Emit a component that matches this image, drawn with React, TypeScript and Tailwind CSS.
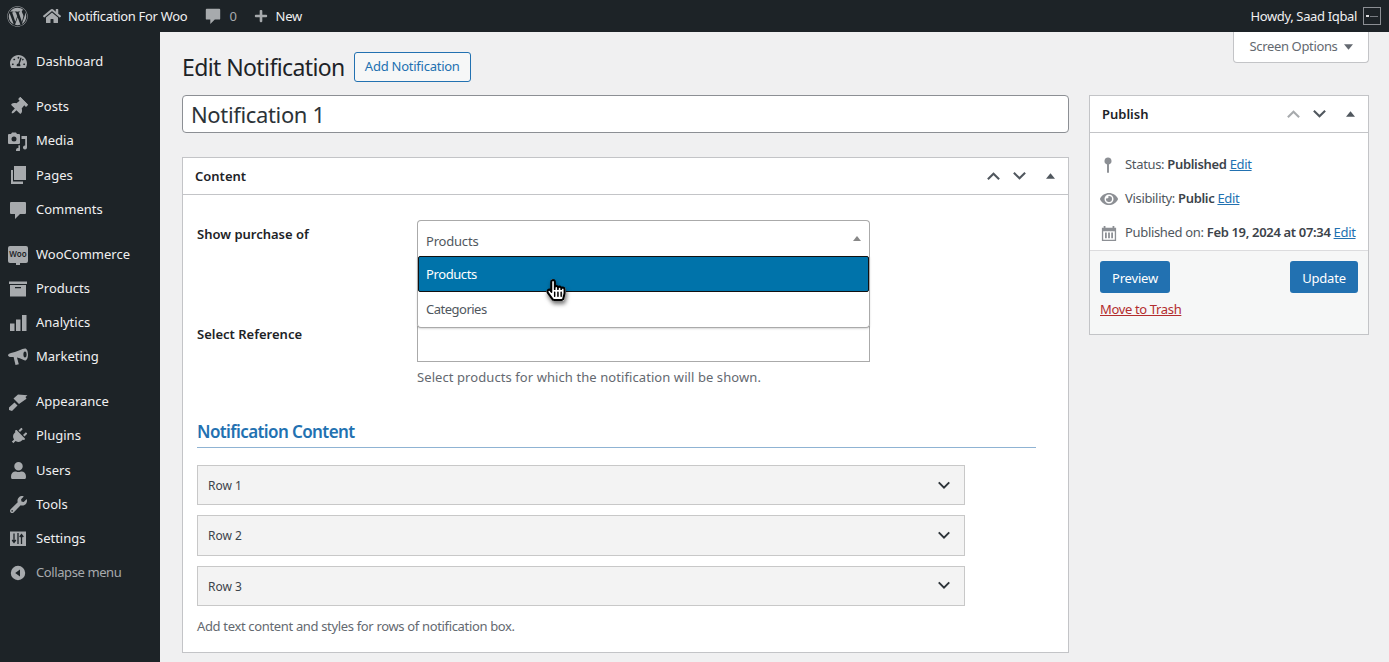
import type { ReactNode } from "react";
import {
  FaWordpress,
  FaHome,
  FaPlus,
  FaTachometerAlt,
  FaThumbtack,
  FaPlug,
  FaUser,
  FaWrench,
  FaEye,
  FaHandPointer,
  FaRegHandPointer,
} from "react-icons/fa";

const font = "font-['Noto_Sans','Open_Sans',sans-serif]";

function CommentIcon({ className }: { className?: string }) {
  return (
    <svg viewBox="0 0 20 20" className={className} fill="currentColor">
      <path d="M3 2h14a1 1 0 0 1 1 1v10a1 1 0 0 1-1 1h-5l-5 5v-5H3a1 1 0 0 1-1-1V3a1 1 0 0 1 1-1z" />
    </svg>
  );
}

function MediaIcon() {
  return (
    <svg viewBox="0 0 20 20" className="w-5 h-5" fill="currentColor">
      <path d="M1 3h2l1-1.500h4L9 3h2a1 1 0 0 1 1 1v8a1 1 0 0 1-1 1H1a1 1 0 0 1-1-1V4a1 1 0 0 1 1-1zm5 2.500a2.500 2.500 0 1 0 0 5 2.500 2.500 0 0 0 0-5z" />
      <path d="M13.500 5H19v11.500a2 2 0 1 1-1.800-2V8h-3.700zM12 14.300V19a2 2 0 1 1-1.600-2v-2.700z" />
    </svg>
  );
}

function PagesIcon() {
  return (
    <svg viewBox="0 0 20 20" className="w-5 h-5" fill="currentColor">
      <path d="M6 1h12v14H6z" />
      <path d="M3 5v14h12v-2.500H5V5z" />
    </svg>
  );
}

function WooIcon() {
  return (
    <span className="relative flex w-5 h-[17px] items-center justify-center rounded-[2px] bg-[#a7aaad] text-[8px] leading-none font-semibold text-[#1d2327]">
      Woo
      <span className="absolute left-[8px] -bottom-[2px] w-[4px] h-[3px] bg-[#a7aaad]" />
    </span>
  );
}

function ArchiveIcon() {
  return (
    <svg viewBox="0 0 20 20" className="w-5 h-5" fill="currentColor">
      <path d="M1 2.500h18V5H1zM2 6h16v11.500H2zm5 2v1.200h6V8z" fillRule="evenodd" />
    </svg>
  );
}

function BarsIcon() {
  return (
    <svg viewBox="0 0 20 20" className="w-5 h-5" fill="currentColor">
      <path d="M2 10.500h4.500V18H2zM8 6.500h4.500V18H8zM14 2h4.500v16H14z" />
    </svg>
  );
}

function MegaphoneIcon() {
  return (
    <svg viewBox="0 0 20 20" className="w-5 h-5" fill="currentColor">
      <path d="M17 1.500c1.800 0 3 2.600 3 6s-1.200 6-3 6c-1.200 0-4-2.400-8-3l1.800 6.800-3.300.7L5.600 10H3a3 3 0 0 1-3-1.500C0 7.500 1 6.500 3 6c5-.7 11.500-4.500 14-4.500zm0 3c-1 0-1.600 1.300-1.600 3s.6 3 1.600 3 1.600-1.300 1.600-3-.6-3-1.600-3z" fillRule="evenodd" />
    </svg>
  );
}

function BrushIcon() {
  return (
    <svg viewBox="0 0 20 20" className="w-5 h-5" fill="currentColor">
      <path d="M1 15.500l5.500-5 3 3-5.500 5.500-3-1z" />
      <path d="M5.500 6.500L10 2.500l9.500.8-2 1.700 1 1.800-7.500 5.200z" />
    </svg>
  );
}

function SlidersIcon() {
  return (
    <svg viewBox="0 0 20 20" className="w-5 h-5">
      <path d="M2 2.500h16v14.500H2z" fill="currentColor" />
      <path d="M6 4.500v9M4.200 11 6 13.500 7.800 11M13.500 15V6M11.700 8l1.800-2.500L15.300 8M10 4v11" stroke="#1d2327" strokeWidth="1.300" fill="none" />
    </svg>
  );
}

function CollapseIcon() {
  return (
    <svg viewBox="0 0 20 20" className="w-4 h-4" fill="currentColor">
      <path d="M10 1a9 9 0 1 1 0 18 9 9 0 0 1 0-18zm2.500 4.500L6.500 10l6 4.500z" fillRule="evenodd" />
    </svg>
  );
}

function Chevron({ up, className }: { up?: boolean; className?: string }) {
  return (
    <svg viewBox="0 0 16 10" className={className} fill="none" stroke="currentColor" strokeWidth="2.200">
      <path d={up ? "M2 8.500l6-6 6 6" : "M2 1.500l6 6 6-6"} />
    </svg>
  );
}

function Triangle({ className }: { className?: string }) {
  return (
    <svg viewBox="0 0 10 6" className={className} fill="currentColor">
      <path d="M5 0l5 6H0z" />
    </svg>
  );
}

type MenuItem = { label: string; icon: ReactNode; gap?: boolean };

const menu: MenuItem[] = [
  { label: "Dashboard", icon: <FaTachometerAlt size={17} /> },
  { label: "Posts", icon: <FaThumbtack size={18} className="rotate-45" />, gap: true },
  { label: "Media", icon: <MediaIcon /> },
  { label: "Pages", icon: <PagesIcon /> },
  { label: "Comments", icon: <CommentIcon className="w-5 h-5" /> },
  { label: "WooCommerce", icon: <WooIcon />, gap: true },
  { label: "Products", icon: <ArchiveIcon /> },
  { label: "Analytics", icon: <BarsIcon /> },
  { label: "Marketing", icon: <MegaphoneIcon /> },
  { label: "Appearance", icon: <BrushIcon />, gap: true },
  { label: "Plugins", icon: <FaPlug size={17} className="rotate-45" /> },
  { label: "Users", icon: <FaUser size={17} /> },
  { label: "Tools", icon: <FaWrench size={17} /> },
  { label: "Settings", icon: <SlidersIcon /> },
];

function Sidebar() {
  return (
    <aside className="w-[160px] shrink-0 bg-[#1d2327] pt-[12.800px]">
      {menu.map((item) => (
        <div
          key={item.label}
          className={`flex h-[34.25px] items-center pl-[8px] text-[13px] text-[#f0f0f1] ${item.gap ? "mt-[10.6px]" : ""}`}
        >
          <span className="flex w-[20px] justify-center text-[#a7aaad]">{item.icon}</span>
          <span className="ml-[8px]">{item.label}</span>
        </div>
      ))}
      <div className="flex h-[34.3px] items-center pl-[9px] text-[13px] tracking-[-0.4px] text-[#a7aaad]">
        <span className="flex w-[18px] justify-center">
          <CollapseIcon />
        </span>
        <span className="ml-[9px]">Collapse menu</span>
      </div>
    </aside>
  );
}

function TopBar() {
  return (
    <header className="flex h-[32px] shrink-0 items-center justify-between bg-[#1d2327] text-[13px] tracking-[-0.3px] text-[#f0f0f1]">
      <div className="flex items-center">
        <FaWordpress size={21} className="ml-[7px] text-[#a7aaad]" />
        <FaHome size={18} className="ml-[15px] text-[#a7aaad]" />
        <span className="ml-[7px] pt-[2px]">Notification For Woo</span>
        <CommentIcon className="ml-[17px] w-[18px] h-[18px] text-[#a7aaad]" />
        <span className="ml-[7px] pt-[2px] text-[#a7aaad]">0</span>
        <FaPlus size={14} className="ml-[17px] text-[#a7aaad]" />
        <span className="ml-[8px] pt-[2px]">New</span>
      </div>
      <div className="flex items-center pr-[8px]">
        <span className="pt-[2px] tracking-[-0.35px]">Howdy, Saad Iqbal</span>
        <span className="ml-[6px] flex w-[18px] h-[18px] items-center gap-[1px] border border-[#8c8f94] bg-[#1d2327] pl-[2px]">
          <span className="w-[3px] h-[2px] bg-[#dcdcde]" />
          <span className="w-[8px] h-[1px] bg-[#787c82]" />
        </span>
      </div>
    </header>
  );
}

function Row({ label }: { label: string }) {
  return (
    <div className="flex flex-1 items-center justify-between border border-[#c8c8c8] bg-[#f3f3f3] pl-[10px] pr-[13px] text-[12px] text-[#3c434a]">
      <span className="pt-[2px]">{label}</span>
      <Chevron className="w-[14px] h-[9px] text-[#2c3338]" />
    </div>
  );
}

function ContentBox() {
  return (
    <section className="mt-[24px] h-[496px] border border-[#c3c4c7] bg-white">
      <div className="flex h-[37px] items-center justify-between border-b border-[#c3c4c7] pl-[12px] pr-[13px]">
        <span className="pt-[2px] text-[13px] font-semibold text-[#1d2327]">Content</span>
        <div className="flex items-center">
          <Chevron up className="w-[15px] h-[10px] text-[#50575e]" />
          <Chevron className="ml-[11px] w-[15px] h-[10px] text-[#50575e]" />
          <Triangle className="ml-[19px] w-[9px] h-[6px] text-[#50575e]" />
        </div>
      </div>
      <div className="pl-[14px] pr-[32px] pt-[25px]">
        <div className="flex">
          <label className="w-[220px] pt-[5px] text-[13px] font-semibold text-[#1d2327]">Show purchase of</label>
          <div className="relative w-[453px]">
            <div className="flex h-[36px] items-center justify-between rounded-t-[4px] border border-b-0 border-[#aaa] bg-white pl-[8px] pr-[8px] text-[13px] tracking-[-0.2px] text-[#50575e]">
              <span className="pt-[7px]">Products</span>
              <Triangle className="w-[8px] h-[5px] text-[#888]" />
            </div>
            <div className="absolute left-0 top-[36px] z-10 w-full rounded-b-[4px] border border-t-0 border-[#aaa] bg-white shadow-[0_1px_2px_rgba(0,0,0,0.15)]">
              <div className="flex h-[36px] items-center rounded-[2px] border border-[#111] bg-[#0073aa] pl-[7px] pt-[2px] text-[13px] tracking-[-0.4px] text-white">
                Products
              </div>
              <div className="flex h-[35px] items-center pl-[8px] text-[13px] tracking-[-0.5px] text-[#50575e]">Categories</div>
            </div>
            <div className="absolute left-[128px] top-[59px] z-20 h-[26px] w-[20px] drop-shadow-[1px_3px_2px_rgba(0,0,0,0.55)]">
              <FaHandPointer size={22} className="absolute left-0 top-0 text-white" />
              <FaRegHandPointer size={22} className="absolute left-0 top-0 text-black" />
            </div>
          </div>
        </div>
        <div className="mt-[70px] flex">
          <label className="-mt-[1px] w-[220px] text-[13px] font-semibold text-[#1d2327]">Select Reference</label>
          <div className="w-[453px]">
            <div className="h-[36px] border border-[#aaa] bg-white" />
            <p className="mt-[6px] text-[13px] tracking-[0.08px] text-[#646970]">Select products for which the notification will be shown.</p>
          </div>
        </div>
        <h2 className="mt-[31px] border-b border-[#8fb3d3] pb-[3px] text-[17px] font-semibold tracking-[-0.6px] text-[#2271b1]">
          Notification Content
        </h2>
        <div className="mt-[17px] flex h-[141px] w-[768px] flex-col gap-[10px]">
          <Row label="Row 1" />
          <Row label="Row 2" />
          <Row label="Row 3" />
        </div>
        <p className="mt-[11px] text-[13px] tracking-[-0.34px] text-[#646970]">Add text content and styles for rows of notification box.</p>
      </div>
    </section>
  );
}

function PublishBox() {
  return (
    <section className="h-[240px] w-[280px] shrink-0 border border-[#c3c4c7] bg-white">
      <div className="flex h-[37px] items-center justify-between border-b border-[#c3c4c7] pl-[12px] pr-[13px]">
        <span className="pt-[2px] text-[13px] font-semibold text-[#1d2327]">Publish</span>
        <div className="flex items-center">
          <Chevron up className="w-[15px] h-[10px] text-[#a7aaad]" />
          <Chevron className="ml-[11px] w-[15px] h-[10px] text-[#50575e]" />
          <Triangle className="ml-[19px] w-[9px] h-[6px] text-[#50575e]" />
        </div>
      </div>
      <div className="h-[81px] pt-[15px] text-[13px] tracking-[-0.33px] text-[#50575e]">
        <div className="flex h-[34px] items-center pl-[10px]">
          <span className="flex w-[16px] justify-center text-[#8c8f94]">
            <svg viewBox="0 0 10 20" className="w-[8px] h-[17px]" fill="currentColor">
              <path d="M5 0a4.500 4.500 0 0 1 1.200 8.800V19H3.800V8.800A4.500 4.500 0 0 1 5 0z" />
            </svg>
          </span>
          <span className="ml-[9px]">
            Status: <b className="font-semibold text-[#3c434a]">Published</b> <a className="text-[#2271b1] underline">Edit</a>
          </span>
        </div>
        <div className="flex h-[34px] items-center pl-[10px]">
          <span className="flex w-[18px] justify-center text-[#8c8f94]">
            <FaEye size={18} />
          </span>
          <span className="ml-[7px]">
            Visibility: <b className="font-semibold text-[#3c434a]">Public</b> <a className="text-[#2271b1] underline">Edit</a>
          </span>
        </div>
        <div className="flex h-[34px] items-center pl-[10px]">
          <span className="flex w-[18px] justify-center text-[#8c8f94]">
            <svg viewBox="0 0 18 18" className="w-[16px] h-[16px]" fill="currentColor">
              <path d="M1 3h2V1h2v2h8V1h2v2h2v15H1zm1.500 4v9.500h13V7zM4.500 8.500h2v6.500h-2zM8 8.500h2v6.500H8zm3.500 0h2v6.500h-2z" fillRule="evenodd" />
            </svg>
          </span>
          <span className="ml-[7px] whitespace-nowrap">
            Published on: <b className="font-semibold text-[#3c434a]">Feb 19, 2024 at 07:34</b> <a className="text-[#2271b1] underline">Edit</a>
          </span>
        </div>
      </div>
      <div className="mt-[36px] h-[84px] border-t border-[#dcdcde] bg-[#f6f7f7] px-[10px] pt-[10px]">
        <div className="flex justify-between">
          <button className="h-[32px] w-[70px] rounded-[3px] bg-[#2271b1] pt-[3px] text-[13px] tracking-[-0.2px] text-white">Preview</button>
          <button className="h-[32px] w-[68px] rounded-[3px] bg-[#2271b1] pt-[3px] text-[13px] tracking-[-0.2px] text-white">Update</button>
        </div>
        <a className="mt-[7px] block text-[13px] tracking-[-0.35px] text-[#b32d2e] underline">Move to Trash</a>
      </div>
    </section>
  );
}

export default function App() {
  return (
    <div className={`flex h-screen flex-col overflow-hidden bg-[#f0f0f1] ${font}`}>
      <TopBar />
      <div className="flex min-h-0 flex-1">
        <Sidebar />
        <main className="min-w-0 flex-1 pl-[22px] pr-[20px]">
          <div className="flex justify-end">
            <button className="flex h-[31px] w-[136px] items-center justify-center gap-[6px] rounded-b-[4px] border border-t-0 border-[#c3c4c7] bg-white text-[13px] tracking-[-0.35px] text-[#646970]">
              Screen Options
              <Triangle className="h-[6px] w-[9px] rotate-180 text-[#646970]" />
            </button>
          </div>
          <div className="-mt-[11px] flex items-center">
            <h1 className="text-[23px] leading-[30px] tracking-[-0.6px] text-[#1d2327]">Edit Notification</h1>
            <button className="ml-[9px] h-[30px] w-[117px] rounded-[3px] border border-[#2271b1] bg-[#f6f7f7] text-[13px] tracking-[-0.25px] text-[#2271b1]">
              Add Notification
            </button>
          </div>
          <div className="mt-[13px] flex gap-[20px]">
            <div className="min-w-0 flex-1">
              <div className="flex h-[38px] items-center rounded-[4px] border border-[#8c8f94] bg-white pl-[8px] text-[22px] tracking-[-0.35px] text-[#2c3338]">
                Notification 1
              </div>
              <ContentBox />
            </div>
            <PublishBox />
          </div>
        </main>
      </div>
    </div>
  );
}
